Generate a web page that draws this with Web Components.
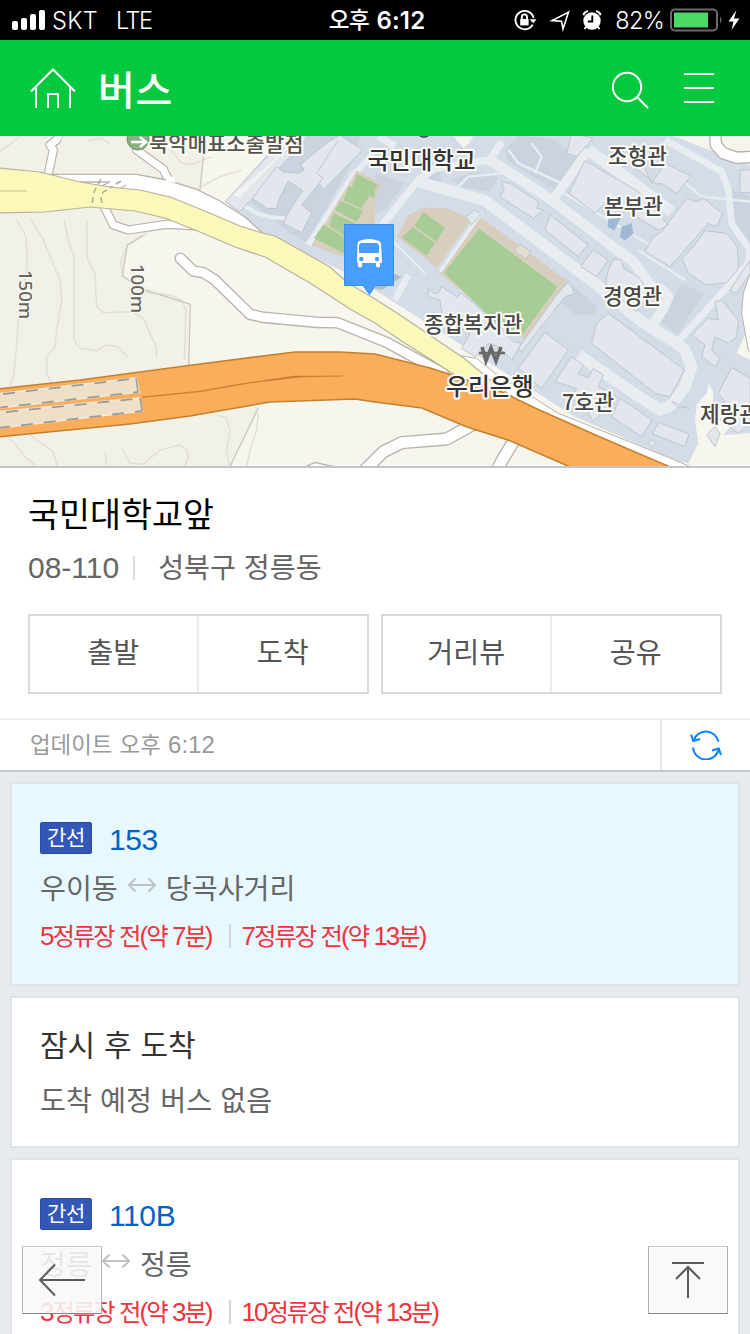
<!DOCTYPE html>
<html lang="ko">
<head>
<meta charset="utf-8">
<title>버스</title>
<style>
html,body{margin:0;padding:0}
body{width:750px;height:1334px;overflow:hidden;background:#e7ebee;font-family:"Liberation Sans","Noto Sans CJK KR",sans-serif;-webkit-font-smoothing:antialiased}
</style>
</head>
<body>
<bus-app></bus-app>
<script>
const define = (name, html) => {
  const tpl = document.createElement('template');
  tpl.innerHTML = html;
  customElements.define(name, class extends HTMLElement {
    constructor() {
      super();
      this.attachShadow({ mode: 'open' }).append(tpl.content.cloneNode(true));
    }
  });
};

define('status-bar', `<style>
:host{display:grid;grid-template-columns:1fr auto 1fr;height:40px;background:#000;color:#fff;font:24px/40px Inter,"Noto Sans CJK KR",sans-serif;white-space:nowrap}
div{display:flex;align-items:center}
.l{padding-left:12px}.r{justify-content:flex-end;padding-right:8px}
svg{display:block;flex:none}
span{position:relative;top:1px}
.net{font-weight:300;font-size:23.5px;margin-left:6px;letter-spacing:.3px}.lte{margin-left:18px;letter-spacing:-1.4px}
.c{font-weight:600;font-size:24px;gap:7px;padding-left:4px;letter-spacing:.2px}
.c b{font-weight:500;font-size:22.5px;letter-spacing:-.3px}
.pc{font-weight:300;font-size:23.5px;margin:0 6px 0 13px;letter-spacing:-.7px}
</style>
<div class="l"><svg width="34" height="20" viewBox="0 0 34 20" fill="#fff"><rect y="11" width="6" height="9" rx="2"/><rect x="9" y="8" width="6" height="12" rx="2"/><rect x="18" y="4" width="6" height="16" rx="2"/><rect x="27" width="6" height="20" rx="2"/></svg>
<span class="net">SKT</span><span class="net lte">LTE</span></div>
<div class="c"><b>오후</b><span>6:12</span></div>
<div class="r">
<svg width="88" height="24" viewBox="0 0 88 24" fill="none" stroke="#fff" stroke-width="1.9"><path d="M18.7 16.6A9.2 9.2 0 1 1 19.6 10"/><path d="M15.5 11.3h7l-3.3 4z" fill="#fff" stroke="none"/><rect x="6.2" y="11" width="8.4" height="6.4" fill="#fff" stroke="none"/><path d="M7.8 11V9a2.6 2.6 0 0 1 5.2 0v2"/><path d="M38 12.6 54.500 4.2 49 21 47.500 13.200z" stroke-width="1.6"/><circle cx="78" cy="13" r="8.7" fill="#fff" stroke="none"/><path d="M69.5 7.2a5 5 0 0 1 4.5-4M82 3.200a5 5 0 0 1 4.500 4" stroke-width="2"/><path d="M78.300 7.500v6h-4.500" stroke="#000"/><path d="m72 19-1.500 2M84 19l1.500 2" stroke-width="2"/></svg>
<span class="pc">82%</span>
<svg width="72" height="24" viewBox="0 0 72 24"><rect x="1" y="1.500" width="46" height="21" rx="4" fill="none" stroke="#6b6b6b" stroke-width="2"/><rect x="4" y="4.500" width="34" height="15" fill="#4cd964"/><path d="M50 8.500q3 3.500 0 7z" fill="#6b6b6b"/><path d="M66.500 2 58.500 13.500h5L61.500 22l8-11.500h-5.500z" fill="#fff"/></svg>
</div>`);

define('top-bar', `<style>
:host{display:flex;align-items:center;height:96px;background:#03c93e;color:#fff;padding:0 35px 0 30px;box-sizing:border-box}
h1{flex:1;margin:5px 0 0 22px;font-size:40px;line-height:60px;font-weight:500;letter-spacing:.6px}
svg{display:block}.s{margin-top:3px}.m{margin-left:34px}
</style>
<svg width="46" height="44" viewBox="0 0 46 44" fill="none" stroke="#fff" stroke-width="2"><path d="M1 25.500 23 3.500 45 25.500M6 21.500V42M40 21.500V42M18 42V28H28V42"/></svg>
<h1>버스</h1>
<svg class="s" width="38" height="38" viewBox="0 0 38 38" fill="none" stroke="#fff" stroke-width="2"><circle cx="15" cy="16" r="14.200"/><path d="m25 26 11 11"/></svg>
<svg class="m" width="31" height="36" viewBox="0 0 31 36" fill="none" stroke="#fff" stroke-width="2"><path d="M0 4h30M0 18h30M0 32h30"/></svg>`);

define('area-map', `<style>
:host{display:block;height:330px;border-bottom:2px solid #c3c6c9;overflow:hidden}
svg{display:block}
.bld{fill:#e2e7ee;stroke:#c1c5cc;stroke-width:3}
.in{fill:none;stroke:#e8edf1;stroke-linejoin:round}
.k{fill:none;stroke:#bab3ac;stroke-linejoin:round;stroke-linecap:round}
.w{fill:none;stroke:#fff;stroke-linejoin:round;stroke-linecap:round}
.ct{fill:none;stroke:#e2e0d4;stroke-width:4.500;stroke-linejoin:round}
.dk{fill:#cad3df}
text{font-family:"Noto Sans CJK KR",sans-serif;font-size:21.400px;fill:#474747;stroke:#fafaf6;stroke-width:4px;stroke-linejoin:round;paint-order:stroke;font-weight:500}
.big{font-size:23.500px;fill:#333}
.alt{font-family:"Noto Sans",sans-serif;font-size:18.500px;fill:#68645b;stroke-width:2px;font-weight:500}
</style>
<svg width="750" height="330" viewBox="0 136 750 330">
<rect y="136" width="750" height="330" fill="#f6f5ee"/>
<g transform="translate(0 130) scale(.33333)">
<path d="M0 0H615L600 180 480 290 385 345 367 437 573 523 567 720 550 860 0 930zM0 920 560 855 780 830 690 1010H0z" fill="#f2f1e8"/>
<g class="ct"><path d="M60 18 0 65M265 32 300 25 330 40M510 55 545 100 575 103 635 80M600 172 660 140 725 120M50 268 78 320 82 410 55 570 50 650 40 740 30 770M92 268 125 320 180 450 185 510 170 600 165 650 140 680 140 730 155 760M192 270 205 330 222 380 222 630 240 655 290 662 320 645 355 650 385 685M260 270 262 385 285 430 290 530 310 548 395 545 430 565 468 650 470 685M440 310 380 350 362 395 370 440M420 475 450 490 510 495 545 510 558 540 553 690M650 855 680 865 690 900 680 960 690 1010M315 970 320 1010M367 957 390 1000 430 1003 480 960 540 945 560 960 565 985 553 1010M775 850 770 900 750 960 740 1010M90 915 160 965 172 1010M25 920 80 985 110 1010"/></g>
<path d="M610 80 600 180M430 315 382 345 367 437 420 475 571 523 566 708M775 833 690 1010" fill="none" stroke="#cac8c3" stroke-width="4"/>
<path d="M865 0 676 215 780 305 1126 470V0z" fill="#d4dce7"/>
<path d="M905 18 830 125 750 215 870 310 920 335 1050 110 1080 18z" class="dk"/>
<path class="in" stroke-width="12" d="M730 225 770 250 815 262 855 265"/>
<path class="bld" d="M838 42 885 18 925 18 720 245 676 214z"/><path d="m845 70 30-50h22L718 203 700 195z" fill="#f2f3f1"/>
<path class="bld" d="M985 35 1020 15 1088 60 970 180 958 160 905 225 935 250 905 308 852 282 858 260 870 240 908 182 865 153 838 205 830 235 800 235 757 205 830 110 850 125 895 130 912 120 903 103z"/><path d="m1015 30-65 100 20 15-12 15" fill="none" stroke="#c1c5cc" stroke-width="3"/>
<path class="in" stroke-width="18" d="M1125 65 1060 135 925 345"/>
<path d="M1070 122 1125 150V385H1040L935 345Z" fill="#d8cfbd"/>
<path d="M1070 133 1125 160V205L1055 175zM1048 168 1108 198 1085 235 1030 210zM1022 212 1090 242 1070 275 1005 240zM1000 248 1065 280 1040 322 988 288zM970 283 1035 325V372L942 325z" fill="#a8cc95"/>
<path class="k" stroke-width="28" d="M175 15 170 30 150 45 160 60 140 155M410 60 490 118 510 160M310 225 340 285 385 300 500 283 600 288"/>
<path class="w" stroke-width="21" d="M175 0V20L170 30 150 45 160 60 140 155M410 60 490 118 510 160M310 225 340 285 385 300 500 283 600 288"/>
<path d="M145 133H410L500 150 590 178 660 213 738 263 785 307 810 325 700 285 520 220 400 182 250 180z" fill="#fff" stroke="#bab3ac" stroke-width="4"/>
<path d="M500 140h22l5 18-30-4z" fill="#fff"/>
<path d="M240 156H330L300 170M380 165 350 180 420 182 520 205" stroke="#bab3ac" stroke-width="4" fill="none"/>
<path class="k" stroke-width="35" d="M541 385 580 423 610 428 645 450 750 553 790 562 950 577 1012 578 1160 637 1330 730"/>
<path class="w" stroke-width="27" d="M541 385 580 423 610 428 645 450 750 553 790 562 950 577 1012 578 1160 637 1330 730"/>
<path class="k" stroke-width="28" d="M920 1022 945 1010 1000 1022"/><path class="w" stroke-width="20" d="M920 1022 945 1010 1000 1022"/>
</g>
<g transform="translate(375 130) scale(.33333)">
<path d="M-1 0H850L950 40 1125 105V560L1112 610 1085 670 1125 690V910L1045 915 1075 880 1015 830V785L1000 760 995 790 965 825 960 870 970 940 940 1000 910 995 600 860 330 690 0 480z" fill="#d4dce7"/>
<path d="M235 18h60l-15 25-15 10zM870 0H1125V105L1060 75 950 40z" fill="#f5f4ed"/>
<path class="dk" d="M390 60 430 18 530 25 620 90 540 180 400 95zM230 150 300 125 370 140 345 185 260 170zM570 460 600 470 665 530V555H600L560 520zM920 460 985 490 910 610 850 575zM1060 170 1125 200V340L1080 290zM150 100 190 100 200 160 160 145zM0 130 90 160 30 240 0 250z"/>
<g class="in"><path stroke-width="22" d="M380 35 345 90 180 115 130 150 10 300M10 18 60 50"/><path stroke-width="31" d="M345 90 530 210 720 355 775 395 830 470 860 480 880 500 865 535 830 590"/><path stroke-width="28" d="M640 60 530 215"/><path stroke-width="34" d="M130 155 330 212 480 325 660 460 800 575 905 640 930 660 950 710 930 770 890 825 855 840 800 805 610 675M640 60 750 140 890 245"/><path stroke-width="20" d="M870 30 1040 125 1060 180 1070 280 1125 360 1120 400 905 640M100 435 60 510"/><path stroke-width="7" d="M400 60 430 100 560 160M470 40 500 80 480 130M250 170 280 140 380 130M0 280 150 430M550 180 900 390M920 150 980 200 1125 215M790 360 930 450"/></g>
<path d="M0 155 22 160 0 205z" fill="#d7cebe"/><path d="M0 160 8 166 0 180z" fill="#a8cc95"/>
<path d="M65 320 100 255 145 233 215 235 290 268 185 415 150 385zM190 428 315 260 580 455 450 630z" fill="#d7cebe"/>
<path d="M145 247 210 293 184 335 118 287zM114 292 180 339 155 377 80 322zM312 296 547 470 440 617 375 590 207 428z" fill="#a8cc95"/>
<path d="M195 425 320 248" class="in" stroke-width="10"/>
<path d="m432 342 36 23-15 22-36-24z" fill="#e3ddd0" stroke="#c1c5cc" stroke-width="3"/>
<g class="bld"><path d="m272 260 28-20 18 12-28 32zM380 155 405 160 490 215 485 235 505 240 475 265 375 200 387 180zM525 255 640 345 625 360 610 380 510 300zM655 360 700 390 665 440 618 410zM700 420 715 388 740 390 745 415 790 440 825 490 785 545 690 470zM590 10 655 25 605 80 575 70zM725 60 800 95 830 160 870 100 948 138 905 190 860 160 845 162 740 85zM630 92 730 150 790 185 880 285 850 300 700 210 660 250 582 190zM935 205 965 215 985 205 1042 250 1025 290 1000 280 885 410 810 365 835 320 860 305zM990 302 1055 310 1087 350 1090 415 1055 458 995 465 940 430 922 385 955 350zM1095 120h45v68h-45z"/>
<path d="M160 475 175 490 190 490 200 470 245 500 260 490 320 540 415 635 440 640 410 690 370 650 340 640 300 680 260 655 285 612 200 550 195 510 160 500zM510 607 580 660 500 775 430 715zM590 680 625 705 610 730 640 745 655 715 685 735 670 770 725 800 695 830 655 875 640 850 655 835 590 810 605 775 540 755zM735 805 832 870 800 920 710 860zM850 877 942 912 930 950 833 912zM700 550 928 720 885 800 840 790 650 640 665 580zM1020 515 1040 510 1090 570 1085 620 1060 640 1020 620 1010 660 1035 685 1020 710 980 680 990 645 950 615 1000 565 1030 570zM1070 712 1125 745V880L1090 910 1030 865 1050 815 1030 790zM1065 480 1125 390V430L1085 490zM580 455 600 490 570 500 440 665 430 655 545 495z"/><path d="m820 940 10-10 15 5-15 15zM1020 890l15 20-15 40-25-35zM890 815l55 20-40-5z"/></g>
<path d="m700 268 38-5-20 38-20-10zM740 290l30-10 5 30-25 22-15-12z" fill="#9fb8d3"/>
<path d="M-5 475 50 430 80 440 20 480z" fill="#888" opacity=".4"/>
<path class="k" stroke-width="38" d="M1020 0 1023 45 1045 70 1085 83 1150 80"/><path class="w" stroke-width="30" d="M1020 0 1023 45 1045 70 1085 83 1150 80"/>
<path d="M1125 430 1105 490 1100 550 1120 660 1140 680V430z" fill="#fff" stroke="#bab3ac" stroke-width="3"/>
<path class="k" stroke-width="40" d="M-35 1025 25 965 80 938 215 927 300 880M370 1012 382 990 418 930"/><path class="w" stroke-width="32" d="M-35 1025 25 965 80 938 215 927 300 880M370 1012 382 990 418 930"/>
<path d="M260 678 305 685 360 730 550 850 870 978 950 1012H850L430 840 200 690z" fill="#fff" stroke="#bab3ac" stroke-width="3"/>
</g>
<path d="M-2 168 40 172 80 182 110 187 140 190 170 197 200 209 240 226 262 233 275 236 330 267 348 283 375 299 400 315 465 359 500 388 535 412 500 400 450 372 430 359 400 340 375 323 350 309 310 283 265 257 235 247 200 232 165 218 135 211 90 207 45 212-2 213z" fill="#fbf9b9" stroke="#b9b09f" stroke-width="1.200"/>
<path d="M0 191h27" stroke="#c9c58f"/>
<path d="M101 179 94 192 92 205M107 190q-8 2-5 13M121 181 110 188" fill="none" stroke="#a9a9a9" stroke-width="1.500" stroke-dasharray="6 4"/>
<path d="M-2 389 80 380 200 364 295 352 340 352 375 354 430 368 452 375 500 391 535 408 600 437 668 466 675 480 600 480 568 466 508 440 467 427 422 408 375 402 355 399 270 402 190 416 130 424-2 437z" fill="#faad5b" stroke="#c4802f" stroke-width="1.600"/>
<path d="M142 397 200 391 240 384 295 376 343 376 300 377 250 383 200 391.800 142 397.500z" fill="#c07c30" stroke="#c07c30" stroke-width=".5"/>
<path d="M-2 394 136 378 139 392-2 408zM-2 412 139 398 142 411-2 428z" fill="#eee0c7" stroke="#f0e7d6" stroke-width="2"/>
<path d="M3 394 135 378.500M-4 408 138 392M6 412 139 398.500M-2 428 142 411" fill="none" stroke="#9b9b9b" stroke-width="1.800" stroke-dasharray="12 11"/><path d="m136 378 2 14M140 398l2 13" stroke="#999" stroke-width="1.500"/>
<circle cx="138" cy="139" r="11" fill="#8caf87" stroke="#6c9266"/><path d="M131 142h14m-5-5 6 5-6 5" fill="none" stroke="#fff" stroke-width="2.500"/>
<ellipse cx="424" cy="133" rx="6" ry="5" fill="#555"/>
<text x="149" y="151" style="font-size:21px;fill:#57544b">북악매표소출발점</text>
<text class="big" x="367.500" y="168.500">국민대학교</text>
<text x="608" y="164">조형관</text><text x="604" y="214">본부관</text><text x="603" y="304">경영관</text>
<text x="424" y="332">종합복지관</text><text x="562" y="410" style="font-size:21.700px">7호관</text><text x="700" y="422">제랑관</text>
<path d="m482 347 4 14 5-13 5 13 5-14" fill="none" stroke="#686868" stroke-width="3.500"/><path d="M479 353h26" stroke="#686868" stroke-width="2.500"/>
<text class="big" x="446" y="395" style="font-size:23.800px">우리은행</text>
<text class="alt" transform="translate(18.500 270) rotate(90)">150m</text>
<text class="alt" transform="translate(130.500 264) rotate(90)">100m</text>
<path d="M344.500 224.500h49v61h-18L369.500 294.500 363 285.500h-18.500z" fill="#479eff" stroke="#3a8ee6"/>
<path fill="#fff" d="M359 241q10-4 20 0 2 1 2.200 4l.8 18h-2v3.500q-2 2-4 0V263H362v3.500q-2 2-4 0V263h-1l.5-18q0-3 1.500-4z"/>
<path fill="#479eff" d="M361 243h16q2 .5 2 3v7h-20v-7q0-2.500 2-3z"/><circle cx="361.300" cy="259" r="2.200" fill="#479eff"/><circle cx="377" cy="259" r="2.200" fill="#479eff"/>
</svg>`);

define('button-pair', `<style>
:host{display:grid;grid-template-columns:1fr 1fr;flex:1;height:80px;box-sizing:border-box;border:2px solid #dadada;color:#555;font-size:28.200px;line-height:75px;text-align:center}
::slotted(*){display:block}
::slotted(:first-child){border-right:2px solid #ececec}
</style><slot></slot>`);

define('stop-info', `<style>
:host{display:block;box-sizing:border-box;height:250px;padding:27px 28px 0;background:#fff}
h2{margin:0;font-size:33.700px;line-height:40px;font-weight:400;color:#000}
p{display:flex;align-items:center;margin:13px 0 26px;font-size:30px;line-height:40px;color:#666}
i{width:2px;height:24px;background:#dcdcdc;margin:0 23px 0 14px}
.num{letter-spacing:0}.place{font-size:28.200px}
.b{display:flex;gap:12px}
</style>
<h2>국민대학교앞</h2>
<p><span class="num">08-110</span><i></i><span class="place">성북구 정릉동</span></p>
<div class="b"><button-pair><span>출발</span><span>도착</span></button-pair><button-pair><span>거리뷰</span><span>공유</span></button-pair></div>`);

define('update-bar', `<style>
:host{display:flex;height:54px;box-sizing:border-box;border-top:2px solid #eff1f3;border-bottom:2px solid #c5c8cb;background:#fff;color:#999;font-size:22.400px;line-height:50px;word-spacing:1px}
span{flex:1;padding-left:30px}b{font-weight:400;font-size:24px}
div{width:88px;border-left:2px solid #e4e7eb;display:flex;align-items:center;justify-content:center}
</style>
<span>업데이트 오후 <b>6:12</b></span>
<div><svg width="32" height="30" viewBox="0 0 32 30" fill="none" stroke="#0d80fc" stroke-width="2"><path d="M3.500 10.500A13 13 0 0 1 28.500 11.500M28.800 18.500A13 13 0 0 1 3 17.500"/><path d="M1 4.500 3.300 11 10 9M31 25 28.700 18.500 22 20.500"/></svg></div>`);

define('info-card', `<style>
:host{display:block;box-sizing:border-box;background:var(--card,#fff);border:2px solid #dfe3e7;padding:var(--pad,38px) 28px 0;height:var(--h)}
</style><slot></slot>`);

define('both-arrow', `<style>:host{display:block;width:28px;height:14px;margin:-8px 10px 0 10px}svg{display:block}</style>
<svg width="28" height="14" viewBox="0 0 28 14" fill="none" stroke="#bfc3c5" stroke-width="2"><path d="M1 7h26M7.500 .500 1 7l6.500 6.500M20.500 .500 27 7l-6.500 6.500"/></svg>`);

define('bus-route', `<style>
:host{display:block}
.a,.b,.c{display:flex;align-items:center}
.a{height:32px}
.t{width:52px;height:32px;box-sizing:border-box;border:1px solid #2b4ca6;border-radius:2px;background:#3257b8;color:#fff;font-size:21px;line-height:30px;text-align:center;letter-spacing:-.2px}
.n{font-size:30px;line-height:32px;color:#0062c4;margin:4px 0 0 17px;letter-spacing:-.4px}
.b{margin-top:15px;font-size:28.200px;line-height:40px;color:#666}
.c{margin-top:7px;font-size:24.400px;line-height:40px;color:#f0333c;letter-spacing:-2px;word-spacing:.5px}
i{width:2px;height:24px;background:#d5d8da;margin:-2px 11px 0 17px}
</style>
<div class="a"><span class="t"><slot name="type"></slot></span><span class="n"><slot name="number"></slot></span></div>
<div class="b"><slot name="from"></slot><both-arrow></both-arrow><slot name="to"></slot></div>
<div class="c"><slot name="first"></slot><i></i><slot name="second"></slot></div>`);

define('float-button', `<style>
:host{position:fixed;bottom:20px;width:80px;height:68px;box-sizing:border-box;border:1px solid #b0b0b0;border-top-color:#c9c9c9;border-bottom-color:#858585;background:rgba(248,248,248,.88);box-shadow:inset 0 0 0 1px #fff8}
</style><slot></slot>`);

define('bus-app', `<style>
:host{display:block;width:750px}
main{display:flex;flex-direction:column;gap:10px;padding:10px}
h3{margin:0;font-size:30px;line-height:40px;font-weight:400;color:#333;word-spacing:.5px}
p{margin:15px 0 0;font-size:28.200px;line-height:40px;color:#666;word-spacing:.4px}
.near{--card:#e8f8ff;--h:204px}.soon{--h:152px;--pad:28px}.last{--h:204px}
.back{left:22px}.top{right:22px}
svg{display:block}
b{font-weight:400;font-size:26px}
</style>
<status-bar></status-bar><top-bar></top-bar><area-map></area-map><stop-info></stop-info><update-bar></update-bar>
<main>
<info-card class="near"><bus-route><span slot="type">간선</span><span slot="number">153</span><span slot="from">우이동</span><span slot="to">당곡사거리</span><span slot="first"><b>5</b>정류장 전<b>(</b>약 <b>7</b>분<b>)</b></span><span slot="second"><b>7</b>정류장 전<b>(</b>약 <b>13</b>분<b>)</b></span></bus-route></info-card>
<info-card class="soon"><h3>잠시 후 도착</h3><p>도착 예정 버스 없음</p></info-card>
<info-card class="last"><bus-route><span slot="type">간선</span><span slot="number">110B</span><span slot="from">정릉</span><span slot="to">정릉</span><span slot="first"><b>3</b>정류장 전<b>(</b>약 <b>3</b>분<b>)</b></span><span slot="second"><b>10</b>정류장 전<b>(</b>약 <b>13</b>분<b>)</b></span></bus-route></info-card>
</main>
<float-button class="back"><svg width="78" height="66" viewBox="0 0 78 66" fill="none" stroke="#5a5a5a" stroke-width="2"><path d="M17 33H62M32 17.500 17 33 32 48.500"/></svg></float-button>
<float-button class="top"><svg width="78" height="66" viewBox="0 0 78 66" fill="none" stroke="#5a5a5a" stroke-width="2"><path d="M23 16H55M39 51V20M27 32 39 20 51 32"/></svg></float-button>`);
</script>
</body>
</html>
